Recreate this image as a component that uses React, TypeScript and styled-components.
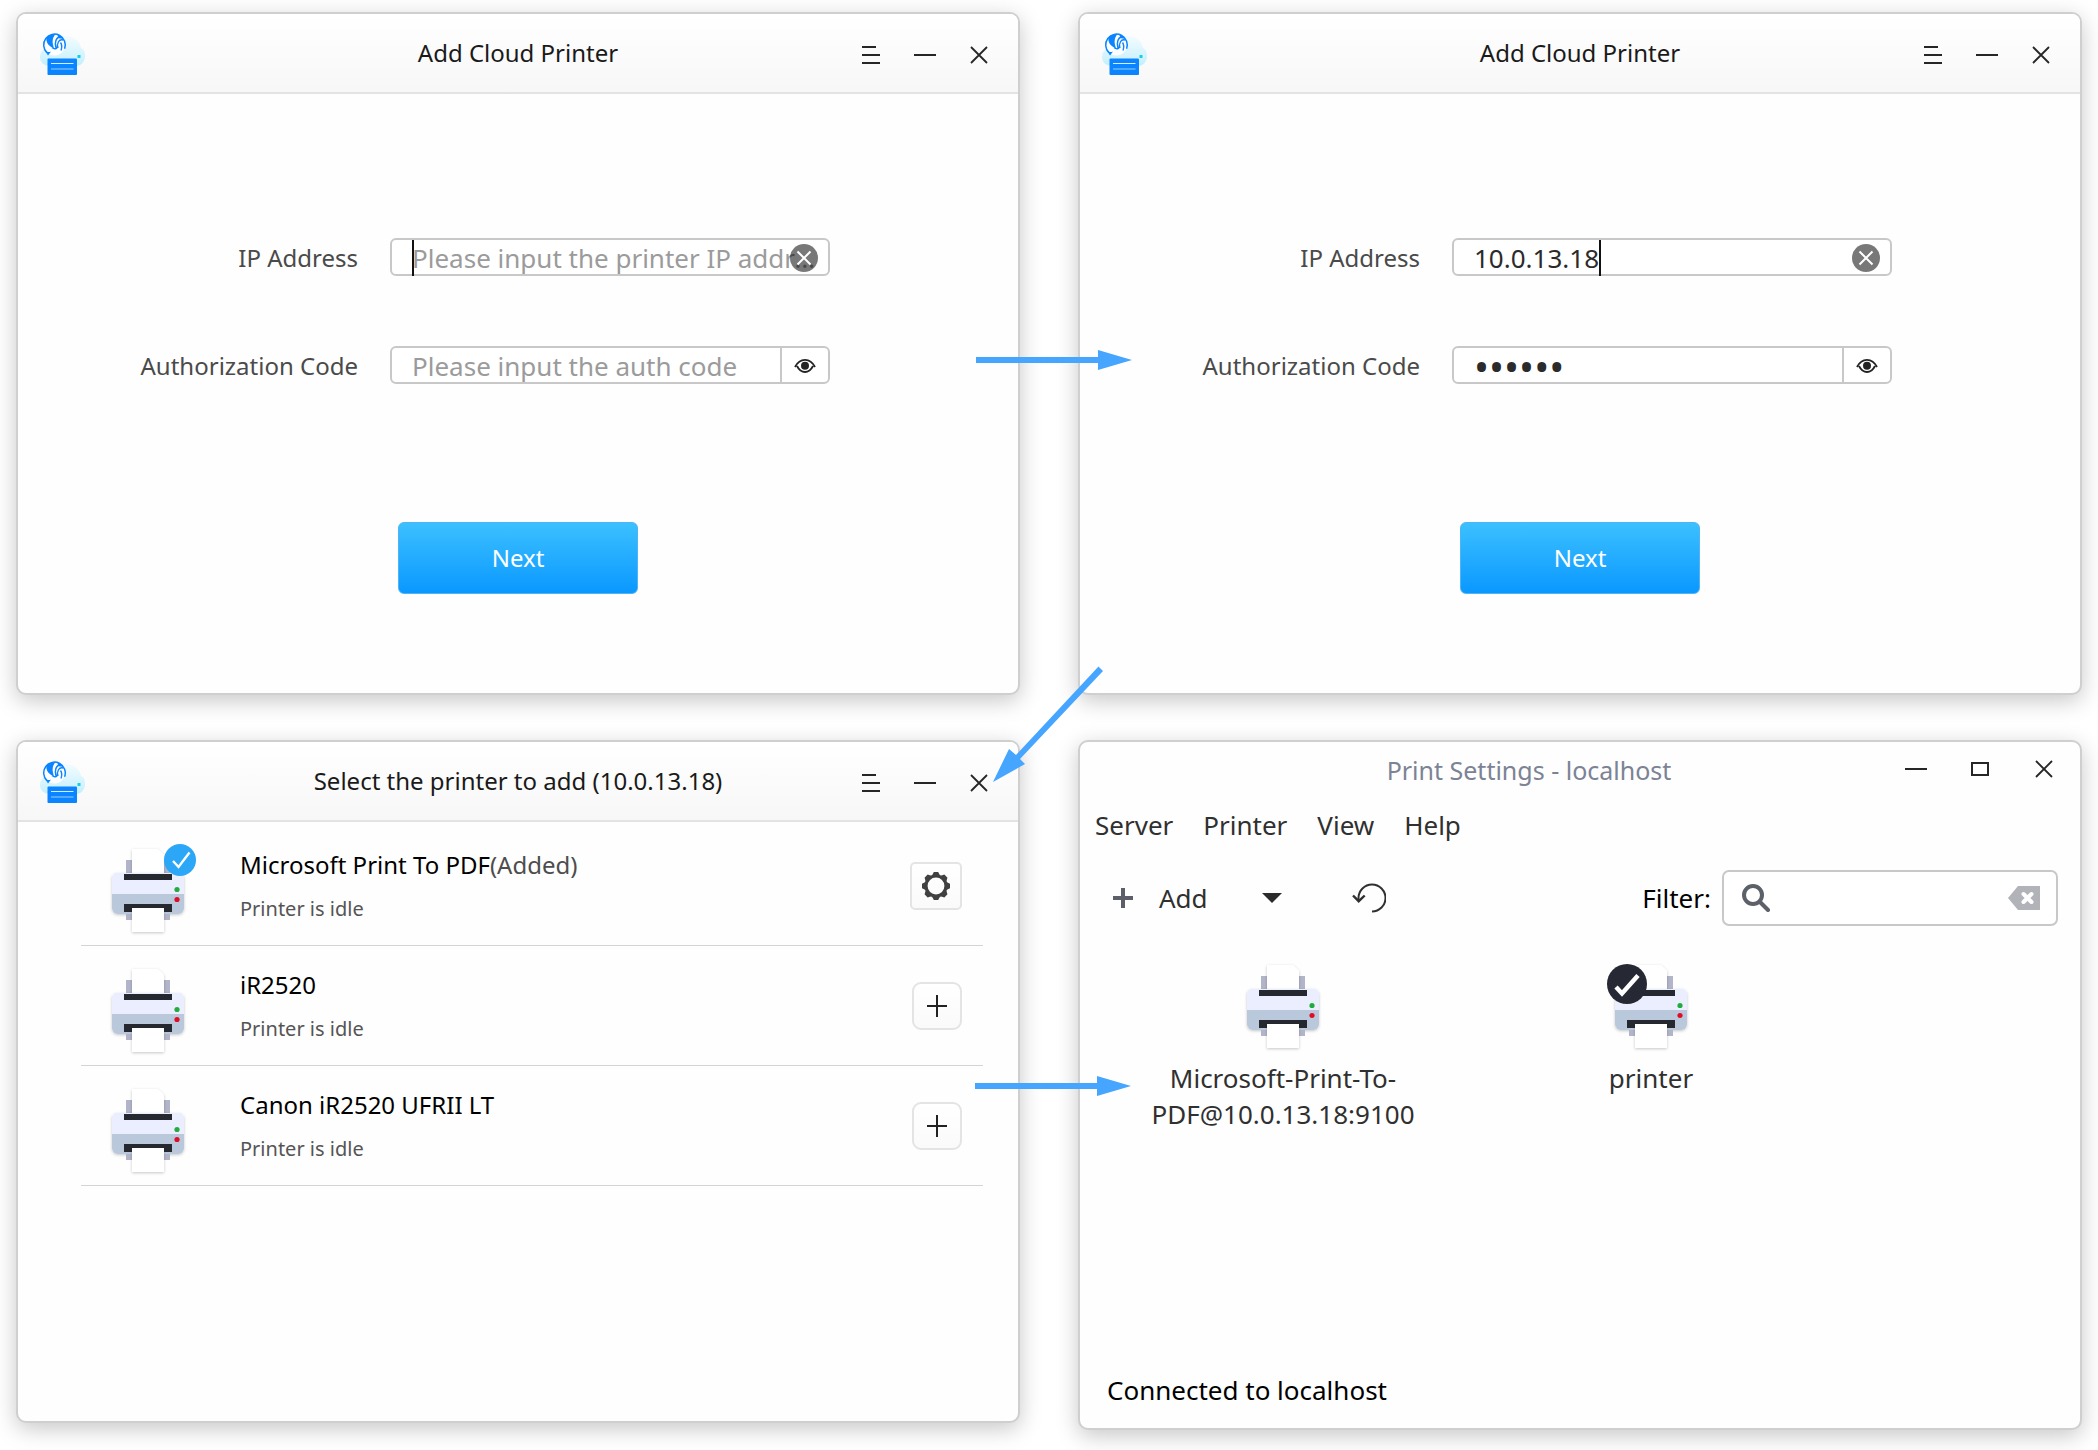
import React, { useId, useLayoutEffect, useState } from "react";
import styled, { createGlobalStyle } from "styled-components";

const FONT = '"Noto Sans", "Open Sans", sans-serif';
const INK = "#303030";
const LINE = "#c8c8c8";
const ARROW = "#45a5ff";

const GlobalStyle = createGlobalStyle`
  *, *::before, *::after { box-sizing: border-box; }
  body {
    margin: 0;
    background: #fff;
    color: #000;
    font-family: ${FONT};
    font-size: 24px;
    line-height: 36px;
  }
  button, input { font: inherit; color: inherit; }
  button { padding: 0; border: 0; background: none; cursor: pointer; }
  svg { display: block; flex: none; }
`;

/* ---------- page ---------- */

const Board = styled.main`
  position: relative;
  display: grid;
  grid-template-columns: repeat(2, minmax(0, 1fr));
  align-items: start;
  gap: 45px 58px;
  padding: 12px 16px 20px;
`;

const Window = styled.section<{ $tall?: boolean }>`
  display: flex;
  flex-direction: column;
  min-height: ${(p) => (p.$tall ? 690 : 683)}px;
  border: 2px solid #cfcfcf;
  border-radius: 10px;
  background: #fefefe;
  background-clip: padding-box;
  box-shadow: 0 6px 22px rgba(0, 0, 0, 0.22);
`;

const ArrowLayer = styled.svg`
  position: absolute;
  top: 0;
  left: calc(50% - 80px);
  pointer-events: none;
`;

/* ---------- title bar ---------- */

const TitleBar = styled.header`
  display: grid;
  grid-template-columns: 1fr auto 1fr;
  align-items: center;
  height: 80px;
  padding: 0 12px 0 16px;
  border-bottom: 2px solid #e3e3e3;
  border-radius: 8px 8px 0 0;
  background: linear-gradient(#fff, #f7f7f7);
`;

const Title = styled.h1`
  margin: 0;
  padding-right: 4px;
  color: #1a1a1a;
  font-size: 24px;
  font-weight: 400;
`;

const Controls = styled.div`
  display: flex;
  justify-content: flex-end;
  padding-top: 4px;
`;

const ControlButton = styled.button<{ $wide?: boolean }>`
  display: flex;
  align-items: center;
  justify-content: center;
  width: ${(p) => (p.$wide ? 64 : 54)}px;
  height: 40px;
  color: #262626;
`;

/* ---------- form ---------- */

const Form = styled.form`
  display: flex;
  flex-direction: column;
  align-items: center;
  padding: 144px 0 98px;
`;

const Fields = styled.div`
  display: grid;
  grid-template-columns: minmax(0, 340fr) minmax(0, 440fr);
  align-items: center;
  gap: 70px 32px;
  width: 100%;
  padding-right: 188px;
`;

const Label = styled.label`
  padding-top: 2px;
  color: #4a4a4a;
  text-align: right;
`;

const InputBox = styled.div`
  position: relative;
  display: flex;
  height: 38px;
  border: 2px solid ${LINE};
  border-radius: 6px;
  background: #fff;
`;

const TextInput = styled.input<{ $masked?: boolean }>`
  flex: 1;
  min-width: 0;
  padding: 2px 8px 0 20px;
  border: 0;
  outline: 0;
  background: none;
  color: #2b2b2b;
  font-size: ${(p) => (p.$masked ? 40 : 26)}px;
  text-overflow: ellipsis;
  &::placeholder { color: #9b9b9b; opacity: 1; }
`;

const ClearButton = styled.button`
  position: absolute;
  top: 4px;
  right: 10px;
`;

const RevealButton = styled.button`
  display: flex;
  align-items: center;
  justify-content: center;
  width: 48px;
  padding-top: 2px;
  border-left: 2px solid ${LINE};
`;

const Caret = styled.span`
  position: absolute;
  top: 0;
  bottom: -2px;
  width: 2px;
  background: #111;
`;

const NextButton = styled.button`
  width: 240px;
  height: 72px;
  margin-top: 138px;
  border: 1px solid #4fb4f5;
  border-radius: 6px;
  background: linear-gradient(#3cc0ff, #0a98ff);
  color: #fff;
`;

/* ---------- printer list ---------- */

const PrinterList = styled.ul`
  margin: 0;
  padding: 4px 35px 0 63px;
  list-style: none;
`;

const PrinterRow = styled.li`
  display: flex;
  align-items: center;
  height: 120px;
  padding: 0 21px 0 27px;
  border-bottom: 1px solid #d4d4d4;
`;

const PrinterPicture = styled.div`
  position: relative;
  padding-top: 8px;
`;

const Badge = styled.div<{ $side: "left" | "right" }>`
  position: absolute;
  top: ${(p) => (p.$side === "left" ? 4 : 8)}px;
  left: ${(p) => (p.$side === "left" ? -4 : 56)}px;
`;

const PrinterText = styled.div`
  flex: 1;
  padding: 0 16px 2px 52px;
`;

const PrinterName = styled.h2`
  margin: 0 0 12px;
  font-size: 24px;
  font-weight: 400;
  span { color: #4d4d4d; }
`;

const PrinterState = styled.p`
  margin: 0;
  color: #555;
  font-size: 20px;
  line-height: 28px;
`;

const RowButton = styled.button<{ $wide?: boolean }>`
  display: flex;
  align-items: center;
  justify-content: center;
  width: ${(p) => (p.$wide ? 52 : 50)}px;
  height: 48px;
  border: 2px solid #e4e4e4;
  border-radius: ${(p) => (p.$wide ? 5 : 9)}px;
  background: linear-gradient(#fff, #fafafa);
`;

/* ---------- print settings ---------- */

const SettingsBar = styled.header`
  display: flex;
  align-items: center;
  height: 56px;
  h1 {
    flex: 1;
    margin: 0;
    padding-left: 94px;
    color: #7b8394;
    font-size: 25px;
    font-weight: 400;
    text-align: center;
  }
  ${Controls} { padding: 0 4px 2px 0; }
`;

const MenuBar = styled.nav`
  display: flex;
  align-items: center;
  gap: 30px;
  height: 54px;
  padding-left: 15px;
  font-size: 26px;
  color: ${INK};
`;

const ToolBar = styled.div`
  display: flex;
  align-items: center;
  height: 92px;
  padding: 0 22px 0 33px;
  font-size: 26px;
`;

const ToolButton = styled.button<{ $gap?: number }>`
  display: flex;
  align-items: center;
  gap: 26px;
  margin-right: ${(p) => p.$gap ?? 0}px;
  color: ${INK};
`;

const FilterLabel = styled.label`
  margin: 0 11px 0 auto;
`;

const FilterBox = styled.div`
  display: flex;
  align-items: center;
  width: 336px;
  height: 56px;
  padding: 0 16px 0 18px;
  border: 2px solid ${LINE};
  border-radius: 7px;
  background: #fff;
`;

const PrinterGrid = styled.ul`
  display: grid;
  grid-template-columns: repeat(auto-fill, 368px);
  flex: 1;
  align-content: start;
  margin: 0;
  padding: 16px 19px;
  list-style: none;
`;

const PrinterTile = styled.li`
  display: flex;
  flex-direction: column;
  align-items: center;
  gap: 8px;
  padding: 0 50px;
  color: ${INK};
  font-size: 26px;
  text-align: center;
`;

const TilePicture = styled.div`
  position: relative;
`;

const StatusBar = styled.footer`
  padding: 0 27px 20px;
  font-size: 26px;
`;

/* ---------- drawings ---------- */

const Logo = () => (
  <svg width="56" height="54" viewBox="0 -2 56 54" aria-hidden="true">
    <defs>
      <linearGradient id="cloud" x1="0" y1="0" x2="0" y2="1">
        <stop offset="0" stopColor="#f3fcff" />
        <stop offset="1" stopColor="#c3effd" />
      </linearGradient>
      <clipPath id="globe"><circle cx="20.500" cy="17" r="11" /></clipPath>
    </defs>
    <path d="M16 38c-6 0-10-4-10-9 0-6 5-9 8-9 2-8 9-12 17-12 9 0 15 5 16 12 4 2 4 5 4 8 0 6-4 10-9 10z" fill="url(#cloud)" />
    <circle cx="20.500" cy="17" r="10.500" fill="#fff" />
    <g clipPath="url(#globe)" fill="none" stroke="#0a84ff" strokeWidth="1.400">
      <path d="M12.500 9c2-2.500 6-3.500 9.500-3-3.500 2.500-4.500 8-2 14-5-1-8.500-5.500-7.500-11z" fill="#0a84ff" stroke="none" />
      <path d="M24 6.500l5 3.500-4-.5z" fill="#0a84ff" />
      <path d="M25.500 8.500c-4 2-5 6-3.500 11.500M29 12c-4-1-6.500 3-5 8M18 19.500c3 2.500 6 1 5.500-2.500M26.500 14.500c1.500 2 1.500 5 .5 8" />
    </g>
    <path d="M12.900 24.600A10.800 10.800 0 1 1 30.600 20.700" fill="none" stroke="#0a84ff" strokeWidth="1.500" />
    <path d="M11 22.500c1.500 1.500 4 2 6 1l-3 4z" fill="#0a84ff" />
    <rect x="43.500" y="27" width="3" height="3" rx=".6" fill="#14cfe6" />
    <rect x="13.500" y="30.500" width="29.500" height="16.500" rx="1" fill="#0a84ff" />
    <path d="M17 35.500h22.500" stroke="#d8ecff" />
    <path d="M17 41h22.500" stroke="#6bb5ff" strokeWidth="1.500" />
  </svg>
);

const MenuIcon = () => (
  <svg width="20" height="20" viewBox="0 0 20 20" stroke="currentColor" strokeWidth="2">
    <path d="M1 2h14M1 10h18M1 18h18" />
  </svg>
);
const MinimizeIcon = () => (
  <svg width="22" height="20" viewBox="0 0 22 20" stroke="currentColor" strokeWidth="2">
    <path d="M0 10h22" />
  </svg>
);
const MaximizeIcon = () => (
  <svg width="20" height="20" viewBox="0 0 20 20" fill="none" stroke="currentColor" strokeWidth="2">
    <path d="M2 4h16v12H2z" />
  </svg>
);
const CloseIcon = () => (
  <svg width="18" height="18" viewBox="0 0 18 18" stroke="currentColor" strokeWidth="1.800">
    <path d="M1 1l16 16M17 1L1 17" />
  </svg>
);
const ClearIcon = () => (
  <svg width="28" height="28" viewBox="0 0 28 28">
    <circle cx="14" cy="14" r="14" fill="#000" fillOpacity=".53" />
    <path d="M7.500 7.500l13 13M20.500 7.500l-13 13" stroke="#fff" strokeWidth="2" />
  </svg>
);
const EyeIcon = () => (
  <svg width="22" height="16" viewBox="0 0 22 16" fill="none" stroke="#222">
    <path d="M1 9C3.500 4 7 1.800 11 1.800S18.500 4 21 9M3 8c2 4 5 6 8 6s6-2 8-6" strokeWidth="1.800" />
    <circle cx="11" cy="7.800" r="4" fill="#222" stroke="none" />
  </svg>
);
const GearIcon = () => (
  <svg width="30" height="30" viewBox="-15 -15 30 30" fill="#404040">
    <circle r="10" fill="none" stroke="#404040" strokeWidth="3.200" />
    {[0, 45, 90, 135, 180, 225, 270, 315].map((a) => (
      <path key={a} d="M-4-10.500L-2.200-14h4.400L4-10.500z" transform={`rotate(${a})`} />
    ))}
  </svg>
);
const PlusIcon = () => (
  <svg width="22" height="22" viewBox="0 0 22 22" stroke="#222" strokeWidth="2">
    <path d="M1 11h20M11 0v22" />
  </svg>
);
const BoldPlusIcon = () => (
  <svg width="20" height="20" viewBox="0 0 20 20" stroke="#5c5f69" strokeWidth="4">
    <path d="M0 10h20M10 0v20" />
  </svg>
);
const DropIcon = () => (
  <svg width="20" height="10" viewBox="0 0 20 10" fill="#2b2b2b">
    <path d="M0 0h20L10 10z" />
  </svg>
);
const UndoIcon = () => (
  <svg width="34" height="30" viewBox="0 0 34 30" fill="none" stroke="#303030" strokeWidth="2">
    <path d="M20 28.500A13.500 13.500 0 1 0 6.500 15v3" />
    <path d="M1 12.500l5.700 5.700 6-5.700" strokeWidth="2.400" />
  </svg>
);
const SearchIcon = () => (
  <svg width="28" height="28" viewBox="0 0 28 28" fill="none" stroke="#5c6068" strokeLinecap="round">
    <circle cx="11" cy="11" r="9" strokeWidth="4" />
    <path d="M18.500 18.500l7.500 7.500" strokeWidth="4" />
  </svg>
);
const BackspaceIcon = () => (
  <svg width="32" height="24" viewBox="0 0 32 24">
    <path d="M0 12L10 0h22v24H10z" fill="#b1b3b8" />
    <path d="M15.500 8l8 8M23.500 8l-8 8" stroke="#fff" strokeWidth="4" strokeLinecap="round" />
  </svg>
);

const PrinterIcon = () => (
  <svg width="80" height="92" viewBox="18 14 80 92" aria-hidden="true">
    <defs>
      <filter id="soft" x="-20%" y="-20%" width="140%" height="140%">
        <feDropShadow dx="0" dy="1" stdDeviation="1.500" floodColor="#000" floodOpacity=".22" />
      </filter>
    </defs>
    <path d="M36 30h44v16H36z" fill="#b2b5ca" />
    <path d="M42 46V19h26l6 6v21z" fill="#fff" filter="url(#soft)" />
    <path d="M36 80h44v10H36z" fill="#b2b5ca" />
    <g filter="url(#soft)">
      <path d="M22 64V48a5 5 0 0 1 5-5h62a5 5 0 0 1 5 5v16z" fill="#ebeefe" />
      <path d="M22 64h72v14a6 6 0 0 1-6 6H28a6 6 0 0 1-6-6z" fill="#bac8db" />
    </g>
    <path d="M34 44h48v6H34zM34 74h48v8H34z" fill="#262830" />
    <path d="M36 84h44v6H36z" fill="#b2b5ca" />
    <path d="M42 78h32v24H42z" fill="#fff" filter="url(#soft)" />
    <circle cx="87" cy="59.500" r="2.600" fill="#24ab3e" />
    <circle cx="87" cy="69.500" r="2.600" fill="#e00b24" />
  </svg>
);

const AddedMark = () => (
  <svg width="32" height="32" viewBox="0 0 32 32">
    <circle cx="16" cy="16" r="16" fill="#2ca7f8" />
    <path d="M9 17l5.500 6L25.500 8.500" fill="none" stroke="#fff" strokeWidth="2.400" />
  </svg>
);
const DefaultMark = () => (
  <svg width="40" height="40" viewBox="0 0 40 40">
    <circle cx="20" cy="20" r="20" fill="#262933" />
    <path d="M9 23l6 6.500L31 11.500" fill="none" stroke="#fff" strokeWidth="4.500" />
  </svg>
);

const Arrows = () => (
  <ArrowLayer width="170" height="1110" viewBox="0 0 170 1110" fill={ARROW} aria-hidden="true">
    <path d="M7 357h122v-7l34 10-34 10v-7H7z" />
    <path d="M6 1083h122v-7l34 10-34 10v-7H6z" />
    <path d="M129.500 666.500L47 755l-7-6-16 33 32-18-5-5L134 671z" />
  </ArrowLayer>
);

/* ---------- parts ---------- */

const FIELD_START = 20;

function useTextWidth(text: string) {
  const [width, setWidth] = useState(0);
  useLayoutEffect(() => {
    const pen = document.createElement("canvas").getContext("2d");
    if (!pen) return;
    pen.font = `26px ${FONT}`;
    setWidth(Math.round(pen.measureText(text).width));
  }, [text]);
  return width;
}

function CloudTitleBar({ title }: { title: string }) {
  return (
    <TitleBar>
      <Logo />
      <Title>{title}</Title>
      <Controls>
        <ControlButton aria-label="Menu"><MenuIcon /></ControlButton>
        <ControlButton aria-label="Minimize"><MinimizeIcon /></ControlButton>
        <ControlButton aria-label="Close"><CloseIcon /></ControlButton>
      </Controls>
    </TitleBar>
  );
}

function AddPrinterWindow({ address, code }: { address: string; code: string }) {
  const id = useId();
  const [ip, setIp] = useState(address);
  const [auth, setAuth] = useState(code);
  const [shown, setShown] = useState(false);
  const caret = FIELD_START + useTextWidth(ip);
  return (
    <Window>
      <CloudTitleBar title="Add Cloud Printer" />
      <Form onSubmit={(e) => e.preventDefault()}>
        <Fields>
          <Label htmlFor={`${id}-ip`}>IP Address</Label>
          <InputBox>
            <TextInput
              id={`${id}-ip`}
              value={ip}
              placeholder="Please input the printer IP address"
              onChange={(e) => setIp(e.target.value)}
            />
            <Caret style={{ left: caret }} />
            <ClearButton type="button" aria-label="Clear" onClick={() => setIp("")}>
              <ClearIcon />
            </ClearButton>
          </InputBox>
          <Label htmlFor={`${id}-code`}>Authorization Code</Label>
          <InputBox>
            <TextInput
              id={`${id}-code`}
              type={shown ? "text" : "password"}
              autoComplete="off"
              value={auth}
              $masked={!shown && auth !== ""}
              placeholder="Please input the auth code"
              onChange={(e) => setAuth(e.target.value)}
            />
            <RevealButton type="button" aria-label="Show code" onClick={() => setShown(!shown)}>
              <EyeIcon />
            </RevealButton>
          </InputBox>
        </Fields>
        <NextButton>Next</NextButton>
      </Form>
    </Window>
  );
}

const FOUND = [
  { name: "Microsoft Print To PDF", added: true },
  { name: "iR2520", added: false },
  { name: "Canon iR2520 UFRII LT", added: false },
];

function SelectPrinterWindow() {
  return (
    <Window>
      <CloudTitleBar title="Select the printer to add (10.0.13.18)" />
      <PrinterList>
        {FOUND.map(({ name, added }) => (
          <PrinterRow key={name}>
            <PrinterPicture>
              <PrinterIcon />
              {added && <Badge $side="right"><AddedMark /></Badge>}
            </PrinterPicture>
            <PrinterText>
              <PrinterName>{name}{added && <span>(Added)</span>}</PrinterName>
              <PrinterState>Printer is idle</PrinterState>
            </PrinterText>
            <RowButton $wide={added} aria-label={added ? "Settings" : "Add"}>
              {added ? <GearIcon /> : <PlusIcon />}
            </RowButton>
          </PrinterRow>
        ))}
      </PrinterList>
    </Window>
  );
}

function PrintSettingsWindow() {
  return (
    <Window $tall>
      <SettingsBar>
        <h1>Print Settings - localhost</h1>
        <Controls>
          <ControlButton $wide aria-label="Minimize"><MinimizeIcon /></ControlButton>
          <ControlButton $wide aria-label="Maximize"><MaximizeIcon /></ControlButton>
          <ControlButton $wide aria-label="Close"><CloseIcon /></ControlButton>
        </Controls>
      </SettingsBar>
      <MenuBar>
        {["Server", "Printer", "View", "Help"].map((m) => (
          <button key={m}>{m}</button>
        ))}
      </MenuBar>
      <ToolBar>
        <ToolButton $gap={54}><BoldPlusIcon />Add</ToolButton>
        <ToolButton $gap={70} aria-label="More"><DropIcon /></ToolButton>
        <ToolButton aria-label="Refresh"><UndoIcon /></ToolButton>
        <FilterLabel htmlFor="filter">Filter:</FilterLabel>
        <FilterBox>
          <SearchIcon />
          <TextInput id="filter" />
          <button aria-label="Clear filter"><BackspaceIcon /></button>
        </FilterBox>
      </ToolBar>
      <PrinterGrid>
        <PrinterTile>
          <TilePicture><PrinterIcon /></TilePicture>
          Microsoft-Print-To-PDF@10.0.13.18:9100
        </PrinterTile>
        <PrinterTile>
          <TilePicture>
            <PrinterIcon />
            <Badge $side="left"><DefaultMark /></Badge>
          </TilePicture>
          printer
        </PrinterTile>
      </PrinterGrid>
      <StatusBar>Connected to localhost</StatusBar>
    </Window>
  );
}

export default function App() {
  return (
    <>
      <GlobalStyle />
      <Board>
        <AddPrinterWindow address="" code="" />
        <AddPrinterWindow address="10.0.13.18" code="100131" />
        <SelectPrinterWindow />
        <PrintSettingsWindow />
        <Arrows />
      </Board>
    </>
  );
}
